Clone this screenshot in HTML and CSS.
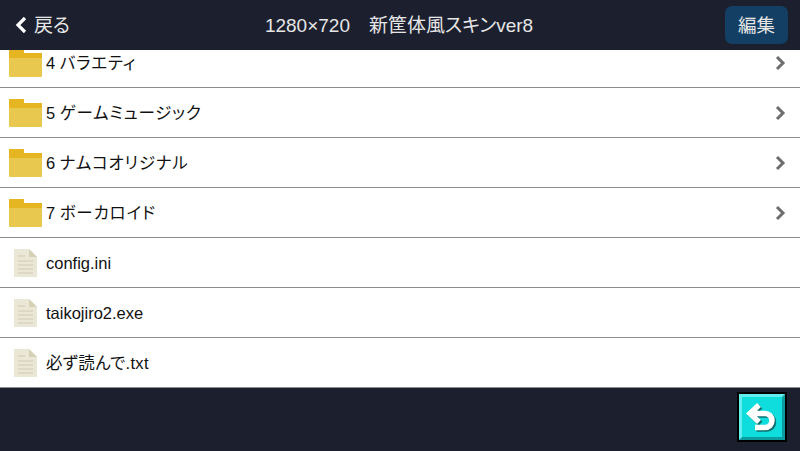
FILE: index.html
```html
<!DOCTYPE html>
<html lang="ja">
<head>
  <meta charset="UTF-8">
  <meta name="viewport" content="width=device-width, initial-scale=1.0">
  <title>1280×720 新筐体風スキンver8</title>
  <link rel="stylesheet" href="styles.css">
</head>
<body>
  <svg class="defs" width="0" height="0">
    <symbol id="folder" viewBox="0 0 33 28">
      <path d="M1 0h14v4h17a1 1 0 0 1 1 1v22a1 1 0 0 1-1 1H1a1 1 0 0 1-1-1V1a1 1 0 0 1 1-1z" fill="#e8c84e"/>
      <path d="M1 0h14v4h18v5H0V1a1 1 0 0 1 1-1z" fill="#e5b522"/>
    </symbol>
    <symbol id="file" viewBox="0 0 23 28">
      <path d="M0 0h15l8 8v20H0z" fill="#ebe7d6"/>
      <path d="M15 0l8 8h-8z" fill="#d6d0b6"/>
      <path d="M4 7h7M4 12h15M4 16h15M4 20h15M4 24h15" stroke="#cfcab4" stroke-width="1" fill="none"/>
    </symbol>
    <symbol id="chevron" viewBox="0 0 11 16">
      <path d="M2 2l6 6-6 6" stroke="currentColor" stroke-width="3" fill="none"/>
    </symbol>
  </svg>

  <header class="topbar">
    <a class="back">
      <svg class="back-icon" width="12" height="18"><path d="M10 2L3 9l7 7" stroke="#fff" stroke-width="3.2" fill="none"/></svg>
      <span class="back-label">戻る</span>
    </a>
    <h1 class="title">1280×720　新筐体風スキンver8</h1>
    <button class="edit" type="button">編集</button>
  </header>

  <main class="list">
    <div class="rows">
      <div class="row"><svg class="icon"><use href="#folder"/></svg><span class="name kana">4 バラエティ</span><svg class="arrow"><use href="#chevron"/></svg></div>
      <div class="row"><svg class="icon"><use href="#folder"/></svg><span class="name kana">5 ゲームミュージック</span><svg class="arrow"><use href="#chevron"/></svg></div>
      <div class="row"><svg class="icon"><use href="#folder"/></svg><span class="name kana">6 ナムコオリジナル</span><svg class="arrow"><use href="#chevron"/></svg></div>
      <div class="row"><svg class="icon"><use href="#folder"/></svg><span class="name kana">7 ボーカロイド</span><svg class="arrow"><use href="#chevron"/></svg></div>
      <div class="row"><svg class="icon file"><use href="#file"/></svg><span class="name latin">config.ini</span></div>
      <div class="row"><svg class="icon file"><use href="#file"/></svg><span class="name latin">taikojiro2.exe</span></div>
      <div class="row"><svg class="icon file"><use href="#file"/></svg><span class="name mixed">必ず読んで.txt</span></div>
    </div>
  </main>

  <footer class="bottombar">
    <button class="return" type="button">
      <svg width="40" height="40" viewBox="0 0 40 40">
        <path d="M17 8l-9 8.500 9 8.500M9 16.500h14a7 7 0 0 1 0 14H13" stroke="#0b6f70" stroke-width="5.500" fill="none" transform="translate(1.500 1.500)"/>
        <path d="M17 8l-9 8.500 9 8.500M9 16.500h14a7 7 0 0 1 0 14H13" stroke="#fff" stroke-width="5.500" fill="none"/>
      </svg>
    </button>
  </footer>
</body>
</html>
```

FILE: styles.css
```css
html, body {
  margin: 0;
  height: 100%;
}
body {
  width: 800px;
  height: 451px;
  overflow: hidden;
  display: flex;
  flex-direction: column;
  background-color: #1b1f2e;
  font-family: "Liberation Sans", "Noto Sans CJK JP", sans-serif;
  font-feature-settings: "palt";
}
.defs {
  position: absolute;
}

.topbar {
  height: 50px;
  flex: none;
  display: grid;
  grid-template-columns: 1fr auto 1fr;
  align-items: center;
  padding: 0 12px 0 15px;
  box-sizing: border-box;
  color: #e6e6e6;
  font-size: 19px;
}
.back {
  display: flex;
  align-items: center;
  gap: 7px;
}
.back-label {
  margin-bottom: 4px;
}
.title {
  margin: 0 5px 3px 0;
  font-size: 19px;
  font-weight: normal;
  white-space: nowrap;
}
.edit {
  width: 63px;
  height: 38px;
  padding: 0 0 2px;
  justify-self: end;
  border: 0;
  border-radius: 7px;
  background-color: #123f63;
  color: #e6e6e6;
  font: inherit;
  font-size: 18.5px;
}

.list {
  height: 338px;
  flex: none;
  overflow: hidden;
  background-color: white;
}
.rows {
  margin-top: -12px;
}
.row {
  height: 49px;
  display: flex;
  align-items: center;
  border-bottom: 1px solid #8c8c8c;
  color: #111;
  font-size: 16.5px;
}
.icon {
  width: 33px;
  height: 28px;
  flex: none;
  margin: 1px 4px 0 9px;
}
.icon.file {
  width: 23px;
  margin: 1px 9px 0 14px;
}
.name {
  flex: 1;
}
.name.kana {
  letter-spacing: .8px;
  word-spacing: -1.600px;
  margin-top: -2px;
}
.name.latin {
  margin-top: 2px;
}
.name.mixed {
  letter-spacing: .3px;
  margin-top: -2px;
}
.arrow {
  width: 11px;
  height: 16px;
  margin-right: 14px;
  color: #6e6e6e;
}

.bottombar {
  flex: 1;
  display: flex;
  justify-content: flex-end;
  align-items: flex-start;
  padding: 6px 15px 0 0;
}
.return {
  width: 46px;
  height: 46px;
  padding: 0;
  display: flex;
  align-items: center;
  justify-content: center;
  box-sizing: border-box;
  border: 3px solid;
  border-color: #62eeee #0a9c9e #0a9c9e #62eeee;
  background-color: #0fdcdc;
  box-shadow: 0 0 0 2px #000;
}
```
